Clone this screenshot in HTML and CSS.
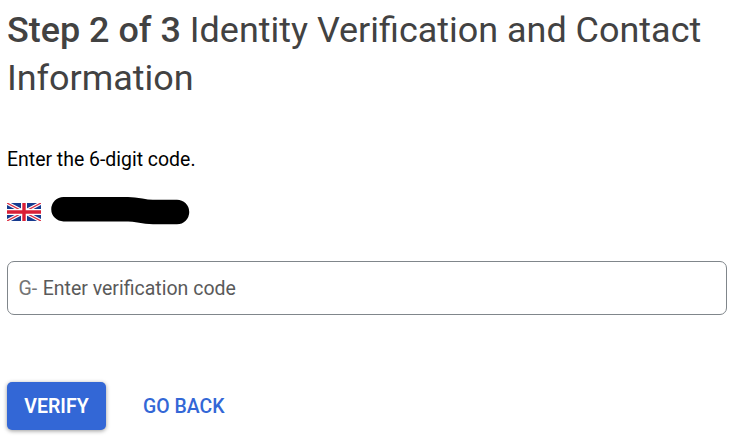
FILE: index.html
```html
<!DOCTYPE html>
<html lang="en">
<head>
<meta charset="utf-8">
<title>Identity Verification</title>
<link rel="stylesheet" href="styles.css">
</head>
<body>
<main class="page">
  <h1 class="title"><b>Step 2 of 3</b> Identity Verification and Contact Information</h1>
  <p class="prompt">Enter the 6-digit code.</p>
  <div class="phone">
    <svg class="flag" viewBox="0 0 34 18" preserveAspectRatio="none">
      <rect width="34" height="18" fill="#173b8f"/>
      <path d="M0 0L34 18M34 0L0 18" stroke="#fff" stroke-width="3.6"/>
      <path d="M0 0L34 18M34 0L0 18" stroke="#dc3045" stroke-width="1.3"/>
      <path d="M17 0V18M0 9H34" stroke="#fff" stroke-width="6"/>
      <path d="M17 0V18M0 9H34" stroke="#d91f36" stroke-width="3.4"/>
    </svg>
    <svg class="redaction" viewBox="0 0 140 30">
      <path d="M12.5 13.2H77C88 13.2 90 16 102 16H126" fill="none" stroke="#000" stroke-width="24.5" stroke-linecap="round" stroke-linejoin="round"/>
    </svg>
  </div>
  <label class="field"><span class="prefix">G-</span><span class="placeholder">Enter verification code</span></label>
  <div class="actions">
    <button class="button primary">VERIFY</button>
    <button class="button text">GO BACK</button>
  </div>
</main>
</body>
</html>
```
FILE: styles.css
```css
* { box-sizing: border-box; }
body { margin: 0; background: #fff; font-family: Roboto, sans-serif; color: #000; }
.page { height: 442px; padding: 6px 18px 0 7px; overflow: hidden; }
.title { margin: 0; font-size: 35.95px; line-height: 48px; font-weight: 400; color: #424242; }
.title b { font-weight: 500; }
.prompt { margin: 46px 0 0; font-size: 19.45px; line-height: 24px; }
.phone { display: flex; align-items: center; height: 30px; margin-top: 24px; }
.flag { width: 34px; height: 18px; margin-top: 1px; }
.redaction { width: 140px; height: 30px; margin-left: 9.5px; }
.field { display: flex; align-items: center; height: 54px; margin-top: 35px; padding: 0 10.5px; border: 1px solid #80868b; border-radius: 7px; font-size: 19.5px; color: #5a5a5a; }
.prefix { margin-right: 5.5px; color: #757575; }
.actions { display: flex; gap: 19px; margin-top: 67px; }
.button { height: 48px; border: 0; border-radius: 5px; padding: 2px 18px 0; font: 500 19.45px/46px Roboto, sans-serif; }
.primary { width: 99px; padding: 2px 0 0; background: #3367d6; color: #fff; font-weight: 600; font-size: 19.5px; box-shadow: 0 1px 4px rgba(0,0,0,.4); }
.text { background: transparent; color: #3367d6; }
```
